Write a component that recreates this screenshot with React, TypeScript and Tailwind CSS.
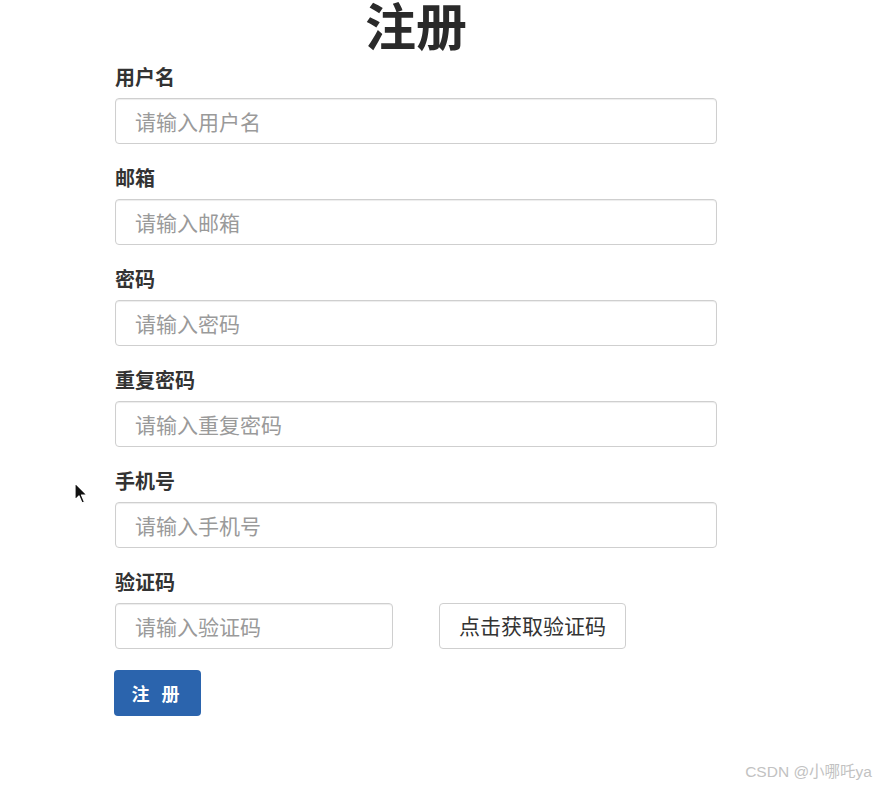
import React from "react";

const font = { fontFamily: '"Noto Sans CJK SC", "Noto Sans", sans-serif' };

function Field({ label, placeholder }: { label: string; placeholder: string }) {
  return (
    <div className="flex flex-col">
      <label className="h-[24px] leading-[24px] text-[20px] font-bold text-[#333]">{label}</label>
      <input
        className="mt-[9px] h-[46px] w-full rounded-[4px] border border-[#cfcfcf] px-[19px] text-[21px] text-[#333] placeholder:text-[#9a9a9a] outline-none shadow-[inset_0_1px_1px_rgba(0,0,0,0.075)]"
        placeholder={placeholder}
      />
    </div>
  );
}

export default function App() {
  return (
    <div className="relative w-[876px] h-[786px] bg-white overflow-hidden" style={font}>
      <div className="ml-[115px] w-[602px] flex flex-col">
        <h1 className="h-[56px] leading-[48px] text-center text-[51px] font-bold text-[#2a2a2a]">注册</h1>
        <div className="mt-[9px] flex flex-col gap-[22px]">
          <Field label="用户名" placeholder="请输入用户名" />
          <Field label="邮箱" placeholder="请输入邮箱" />
          <Field label="密码" placeholder="请输入密码" />
          <Field label="重复密码" placeholder="请输入重复密码" />
          <Field label="手机号" placeholder="请输入手机号" />
          <div className="flex flex-col">
            <label className="h-[24px] leading-[24px] text-[20px] font-bold text-[#333]">验证码</label>
            <div className="mt-[9px] flex items-center gap-[46px]">
              <input
                className="h-[46px] w-[278px] rounded-[4px] border border-[#cfcfcf] px-[19px] text-[21px] text-[#333] placeholder:text-[#9a9a9a] outline-none shadow-[inset_0_1px_1px_rgba(0,0,0,0.075)]"
                placeholder="请输入验证码"
              />
              <button className="h-[46px] w-[187px] rounded-[4px] border border-[#cfcfcf] bg-white text-[21px] text-[#333]">
                点击获取验证码
              </button>
            </div>
          </div>
        </div>
        <div className="mt-[21px]">
          <button className="-ml-[1px] h-[46px] w-[87px] rounded-[4px] bg-[#2b64ad] text-[18px] font-bold text-white tracking-[4px]">
            注 册
          </button>
        </div>
      </div>

      <svg className="absolute left-[73px] top-[482px]" width="16" height="24" viewBox="0 0 16 24">
        <path d="M2 1 L2 18 L6 14 L9 21 L11.5 20 L8.5 13 L14 13 Z" fill="#111" stroke="#fff" strokeWidth="1.2" strokeLinejoin="round" />
      </svg>

      <div
        className="absolute right-[4px] top-[760px] text-[15.5px] text-[#c2c2c2]"
        style={{ fontFamily: '"Liberation Sans", "Noto Sans CJK SC", sans-serif' }}
      >
        CSDN @小哪吒ya
      </div>
    </div>
  );
}
